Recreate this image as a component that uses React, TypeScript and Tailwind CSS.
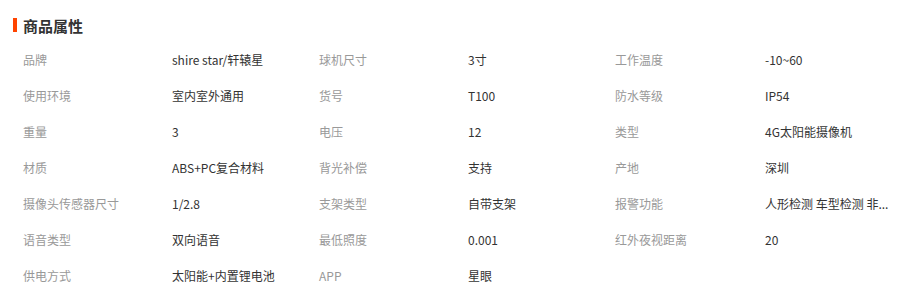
// 商品属性 table
const rows: [string, string][][] = [
  [['品牌', 'shire star/轩辕星'], ['球机尺寸', '3寸'], ['工作温度', '-10~60']],
  [['使用环境', '室内室外通用'], ['货号', 'T100'], ['防水等级', 'IP54']],
  [['重量', '3'], ['电压', '12'], ['类型', '4G太阳能摄像机']],
  [['材质', 'ABS+PC复合材料'], ['背光补偿', '支持'], ['产地', '深圳']],
  [['摄像头传感器尺寸', '1/2.8'], ['支架类型', '自带支架'], ['报警功能', '人形检测 车型检测 非...']],
  [['语音类型', '双向语音'], ['最低照度', '0.001'], ['红外夜视距离', '20']],
  [['供电方式', '太阳能+内置锂电池'], ['APP', '星眼']],
];

export default function App() {
  return (
    <div
      className="w-[914px] h-[292px] bg-white overflow-hidden"
      style={{ fontFamily: '"Noto Sans CJK SC", "Noto Sans", sans-serif' }}
    >
      <div className="mt-[15px] mb-[7px] h-[20px] flex items-center pl-[13px]">
        <span className="w-[4px] h-[14px] bg-[#ff4400] mr-[6px]" />
        <span className="text-[15px] font-bold text-[#333] leading-none">商品属性</span>
      </div>
      <div className="pl-[23px] grid grid-cols-[149px_147px_149px_147px_150px_140px]">
        {rows.map((row, i) =>
          [0, 1, 2].map((j) => {
            const cell = row[j];
            return [
              <div key={`${i}-${j}-l`} className="h-[36px] flex items-center text-[12px] text-[#999] whitespace-nowrap">
                {cell ? cell[0] : ''}
              </div>,
              <div key={`${i}-${j}-v`} className="h-[36px] flex items-center text-[12px] text-[#333] whitespace-nowrap">
                {cell ? cell[1] : ''}
              </div>,
            ];
          })
        )}
      </div>
    </div>
  );
}
